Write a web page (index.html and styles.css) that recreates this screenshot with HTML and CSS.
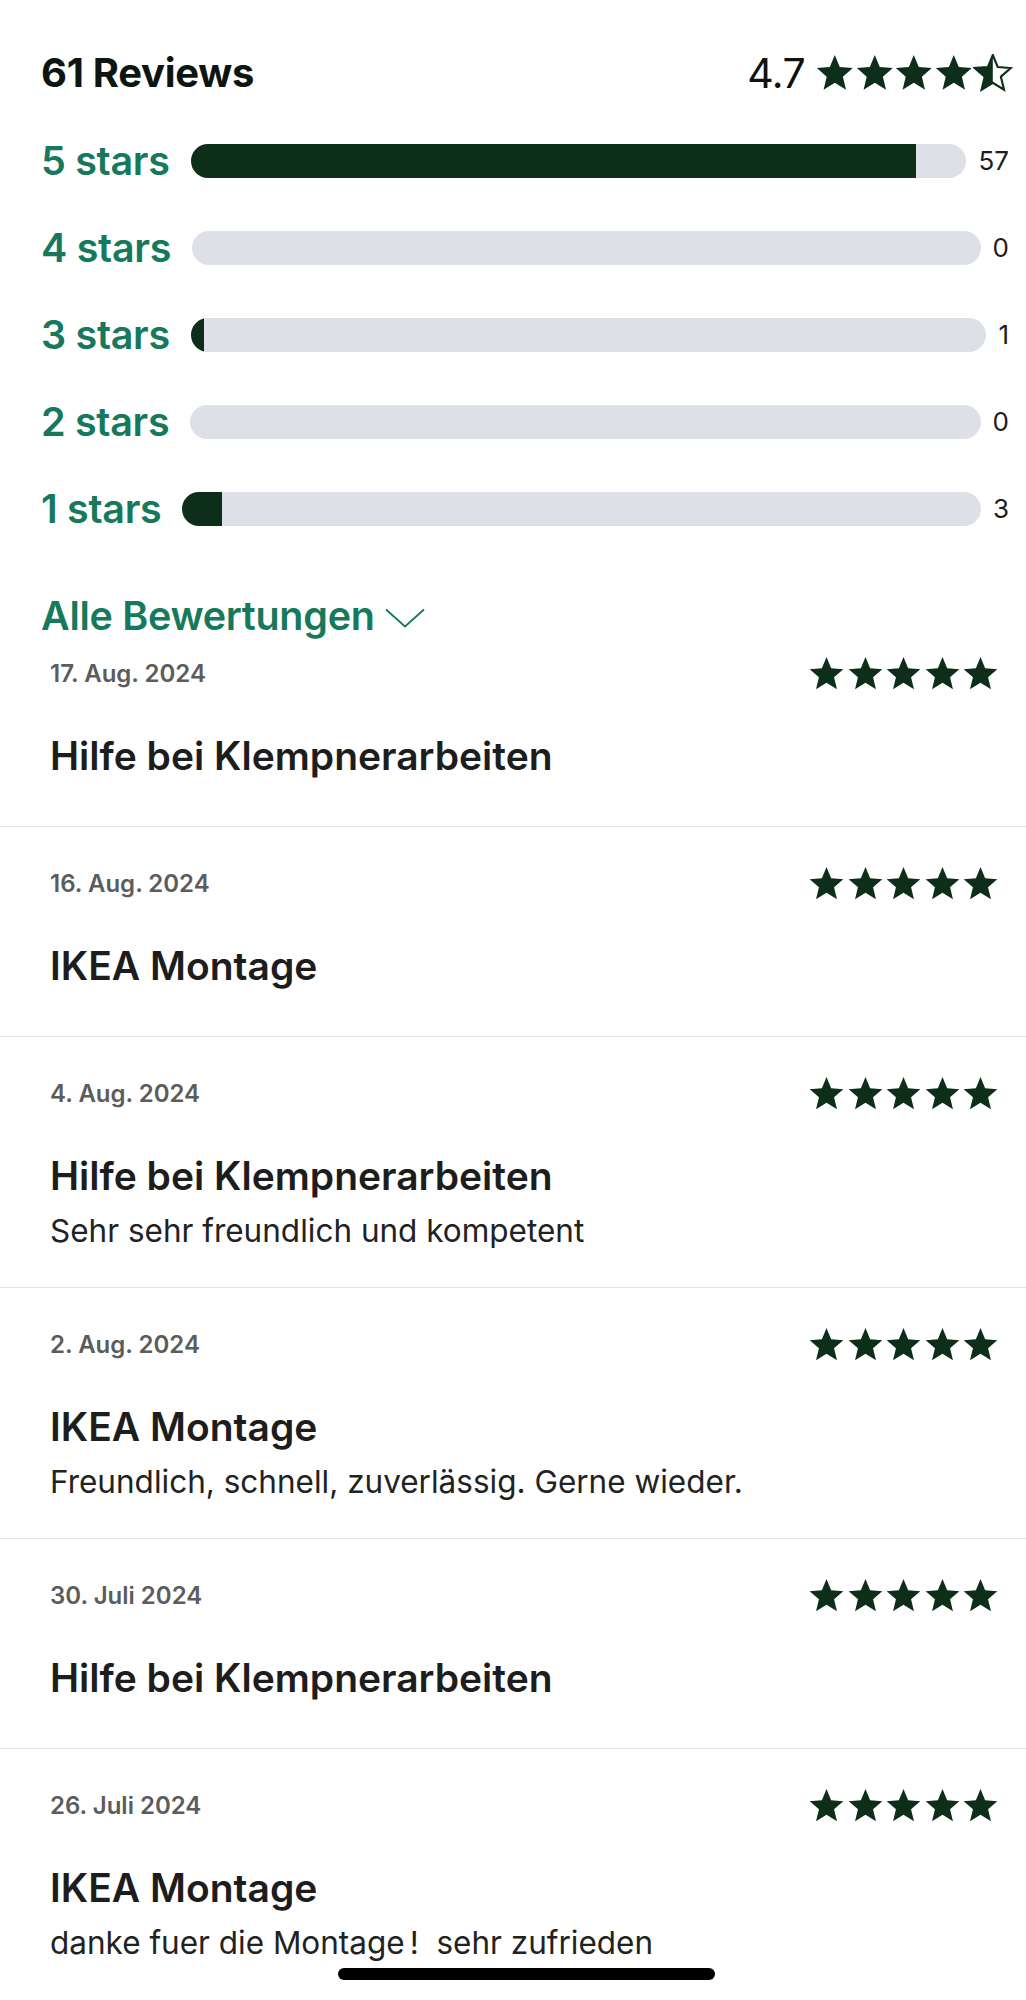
FILE: index.html
```html
<!DOCTYPE html>
<html lang="de">
<head>
<meta charset="utf-8">
<title>Reviews</title>
<link rel="stylesheet" href="styles.css">
</head>
<body>
<svg width="0" height="0" class="defs" aria-hidden="true">
  <defs>
    <symbol id="star" viewBox="0 0 24 23">
      <polygon points="12,0.6 15.0,7.9 22.9,8.5 16.9,13.7 18.8,21.6 12,17.4 5.2,21.6 7.1,13.7 1.1,8.5 9.0,7.9"/>
    </symbol>
  </defs>
</svg>
<main class="page">
  <section class="summary">
    <div class="summary-header">
      <h1 class="summary-title">61 Reviews</h1>
      <div class="summary-score">
        <span class="score-value">4.7</span>
        <span class="stars stars-lg">
          <svg class="star"><use href="#star"/></svg>
          <svg class="star"><use href="#star"/></svg>
          <svg class="star"><use href="#star"/></svg>
          <svg class="star"><use href="#star"/></svg>
          <svg class="star" viewBox="0 0 24 23">
            <defs><clipPath id="halfclip"><rect x="0" y="0" width="12" height="23"/></clipPath></defs>
            <polygon class="star-outline" points="12,0.6 15.0,7.9 22.9,8.5 16.9,13.7 18.8,21.6 12,17.4 5.2,21.6 7.1,13.7 1.1,8.5 9.0,7.9"/>
            <polygon clip-path="url(#halfclip)" points="12,0.6 15.0,7.9 22.9,8.5 16.9,13.7 18.8,21.6 12,17.4 5.2,21.6 7.1,13.7 1.1,8.5 9.0,7.9"/>
          </svg>
        </span>
      </div>
    </div>

    <ul class="dist">
      <li class="dist-row">
        <span class="dist-label">5 stars</span>
        <span class="dist-bar"><span class="dist-fill" style="width:93.44%"></span></span>
        <span class="dist-count">57</span>
      </li>
      <li class="dist-row">
        <span class="dist-label">4 stars</span>
        <span class="dist-bar"><span class="dist-fill" style="width:0%"></span></span>
        <span class="dist-count">0</span>
      </li>
      <li class="dist-row">
        <span class="dist-label">3 stars</span>
        <span class="dist-bar"><span class="dist-fill" style="width:1.64%"></span></span>
        <span class="dist-count">1</span>
      </li>
      <li class="dist-row">
        <span class="dist-label">2 stars</span>
        <span class="dist-bar"><span class="dist-fill" style="width:0%"></span></span>
        <span class="dist-count">0</span>
      </li>
      <li class="dist-row">
        <span class="dist-label">1 stars</span>
        <span class="dist-bar"><span class="dist-fill" style="width:4.92%"></span></span>
        <span class="dist-count">3</span>
      </li>
    </ul>

    <button class="all-toggle" type="button">
      <span>Alle Bewertungen</span>
      <svg class="chevron" viewBox="0 0 40 20"><polyline points="1,1.5 20,18.5 39,1.5"/></svg>
    </button>
  </section>

  <section class="reviews">
    <article class="review">
      <div class="review-head">
        <span class="review-date">17. Aug. 2024</span>
        <span class="stars stars-sm">
          <svg class="star"><use href="#star"/></svg><svg class="star"><use href="#star"/></svg><svg class="star"><use href="#star"/></svg><svg class="star"><use href="#star"/></svg><svg class="star"><use href="#star"/></svg>
        </span>
      </div>
      <h2 class="review-title">Hilfe bei Klempnerarbeiten</h2>
    </article>

    <article class="review">
      <div class="review-head">
        <span class="review-date">16. Aug. 2024</span>
        <span class="stars stars-sm">
          <svg class="star"><use href="#star"/></svg><svg class="star"><use href="#star"/></svg><svg class="star"><use href="#star"/></svg><svg class="star"><use href="#star"/></svg><svg class="star"><use href="#star"/></svg>
        </span>
      </div>
      <h2 class="review-title">IKEA Montage</h2>
    </article>

    <article class="review">
      <div class="review-head">
        <span class="review-date">4. Aug. 2024</span>
        <span class="stars stars-sm">
          <svg class="star"><use href="#star"/></svg><svg class="star"><use href="#star"/></svg><svg class="star"><use href="#star"/></svg><svg class="star"><use href="#star"/></svg><svg class="star"><use href="#star"/></svg>
        </span>
      </div>
      <h2 class="review-title">Hilfe bei Klempnerarbeiten</h2>
      <p class="review-body">Sehr sehr freundlich und kompetent</p>
    </article>

    <article class="review">
      <div class="review-head">
        <span class="review-date">2. Aug. 2024</span>
        <span class="stars stars-sm">
          <svg class="star"><use href="#star"/></svg><svg class="star"><use href="#star"/></svg><svg class="star"><use href="#star"/></svg><svg class="star"><use href="#star"/></svg><svg class="star"><use href="#star"/></svg>
        </span>
      </div>
      <h2 class="review-title">IKEA Montage</h2>
      <p class="review-body">Freundlich, schnell, zuverlässig. Gerne wieder.</p>
    </article>

    <article class="review">
      <div class="review-head">
        <span class="review-date">30. Juli 2024</span>
        <span class="stars stars-sm">
          <svg class="star"><use href="#star"/></svg><svg class="star"><use href="#star"/></svg><svg class="star"><use href="#star"/></svg><svg class="star"><use href="#star"/></svg><svg class="star"><use href="#star"/></svg>
        </span>
      </div>
      <h2 class="review-title">Hilfe bei Klempnerarbeiten</h2>
    </article>

    <article class="review">
      <div class="review-head">
        <span class="review-date">26. Juli 2024</span>
        <span class="stars stars-sm">
          <svg class="star"><use href="#star"/></svg><svg class="star"><use href="#star"/></svg><svg class="star"><use href="#star"/></svg><svg class="star"><use href="#star"/></svg><svg class="star"><use href="#star"/></svg>
        </span>
      </div>
      <h2 class="review-title">IKEA Montage</h2>
      <p class="review-body">danke fuer die Montage<span class="excl">!</span>&nbsp; sehr zufrieden</p>
    </article>
  </section>
</main>
<div class="home-indicator"></div>
</body>
</html>
```

FILE: styles.css
```css
* { box-sizing: border-box; }

html, body {
  margin: 0;
  padding: 0;
  background: #ffffff;
}

body {
  height: 2000px;
  overflow: hidden;
  position: relative;
  font-family: "Inter", "Liberation Sans", sans-serif;
  color: #1d1d1d;
}

.defs { position: absolute; }

.page { display: block; }

/* ---------- summary ---------- */
.summary {
  padding: 47px 17px 0 41px;
}

.summary-header {
  height: 52px;
  display: flex;
  align-items: center;
  justify-content: space-between;
}

.summary-title {
  margin: 0;
  font-size: 40px;
  line-height: 52px;
  font-weight: 700;
  color: #0c1510;
  letter-spacing: -0.3px;
}

.summary-score {
  display: flex;
  align-items: center;
  gap: 10px;
  margin-right: -4px;
}

.score-value {
  font-size: 41px;
  line-height: 52px;
  font-weight: 400;
  color: #111;
  letter-spacing: -0.6px;
}

.stars {
  display: flex;
  fill: #0d2e18;
}

.stars-lg { gap: 0; }
.stars-lg .star { width: 39.6px; height: 38px; }

.star-outline {
  fill: #ffffff;
  stroke: #0d2e18;
  stroke-width: 1.3;
  stroke-linejoin: miter;
}

.dist {
  list-style: none;
  margin: 18px 0 0;
  padding: 0;
}

.dist-row {
  height: 87px;
  display: flex;
  align-items: center;
}

.dist-label {
  font-size: 39.5px;
  line-height: 48px;
  font-weight: 600;
  color: #17795b;
  letter-spacing: -0.3px;
  margin-right: 21px;
  white-space: nowrap;
}

.dist-bar {
  flex: 1;
  height: 34px;
  border-radius: 17px;
  background: #dde0e7;
  overflow: hidden;
  display: flex;
}

.dist-fill {
  height: 100%;
  background: #0d2e18;
}

.dist-count {
  margin-left: 12px;
  font-size: 26px;
  line-height: 34px;
  color: #1d1d1d;
}

.all-toggle {
  margin: 40px 0 0;
  padding: 0;
  height: 48px;
  border: 0;
  background: none;
  display: flex;
  align-items: center;
  gap: 10px;
  font-family: inherit;
  font-size: 39.5px;
  line-height: 48px;
  font-weight: 600;
  color: #17795b;
  letter-spacing: -0.3px;
  cursor: pointer;
}

.chevron {
  width: 40px;
  height: 20px;
  margin-top: 4px;
  fill: none;
  stroke: #17795b;
  stroke-width: 1.8;
}

/* ---------- reviews ---------- */
.reviews { display: block; }

.review {
  padding: 37px 27px 36px 50px;
  border-bottom: 1px solid #e5e5e5;
}

.review:first-child { padding-top: 14px; }
.review:last-child { border-bottom: 0; }

.review-head {
  height: 40px;
  display: flex;
  align-items: center;
  justify-content: space-between;
}

.review-date {
  font-size: 24px;
  line-height: 40px;
  font-weight: 600;
  color: #5c5c5c;
}

.stars-sm { gap: 1.5px; }
.stars-sm .star { width: 37px; height: 35.5px; }

.review-title {
  margin: 38px 0 0;
  font-size: 39px;
  line-height: 48px;
  font-weight: 600;
  color: #1d1d1d;
  letter-spacing: 0;
}

.review-title:last-child { margin-bottom: 10px; }

.review-body {
  margin: 11px 0 0;
  font-size: 31.5px;
  line-height: 40px;
  font-weight: 400;
  color: #222;
}

.excl { margin-left: 5px; }

.home-indicator {
  position: absolute;
  left: 338px;
  top: 1968px;
  width: 377px;
  height: 12px;
  border-radius: 6px;
  background: #000;
}
```
